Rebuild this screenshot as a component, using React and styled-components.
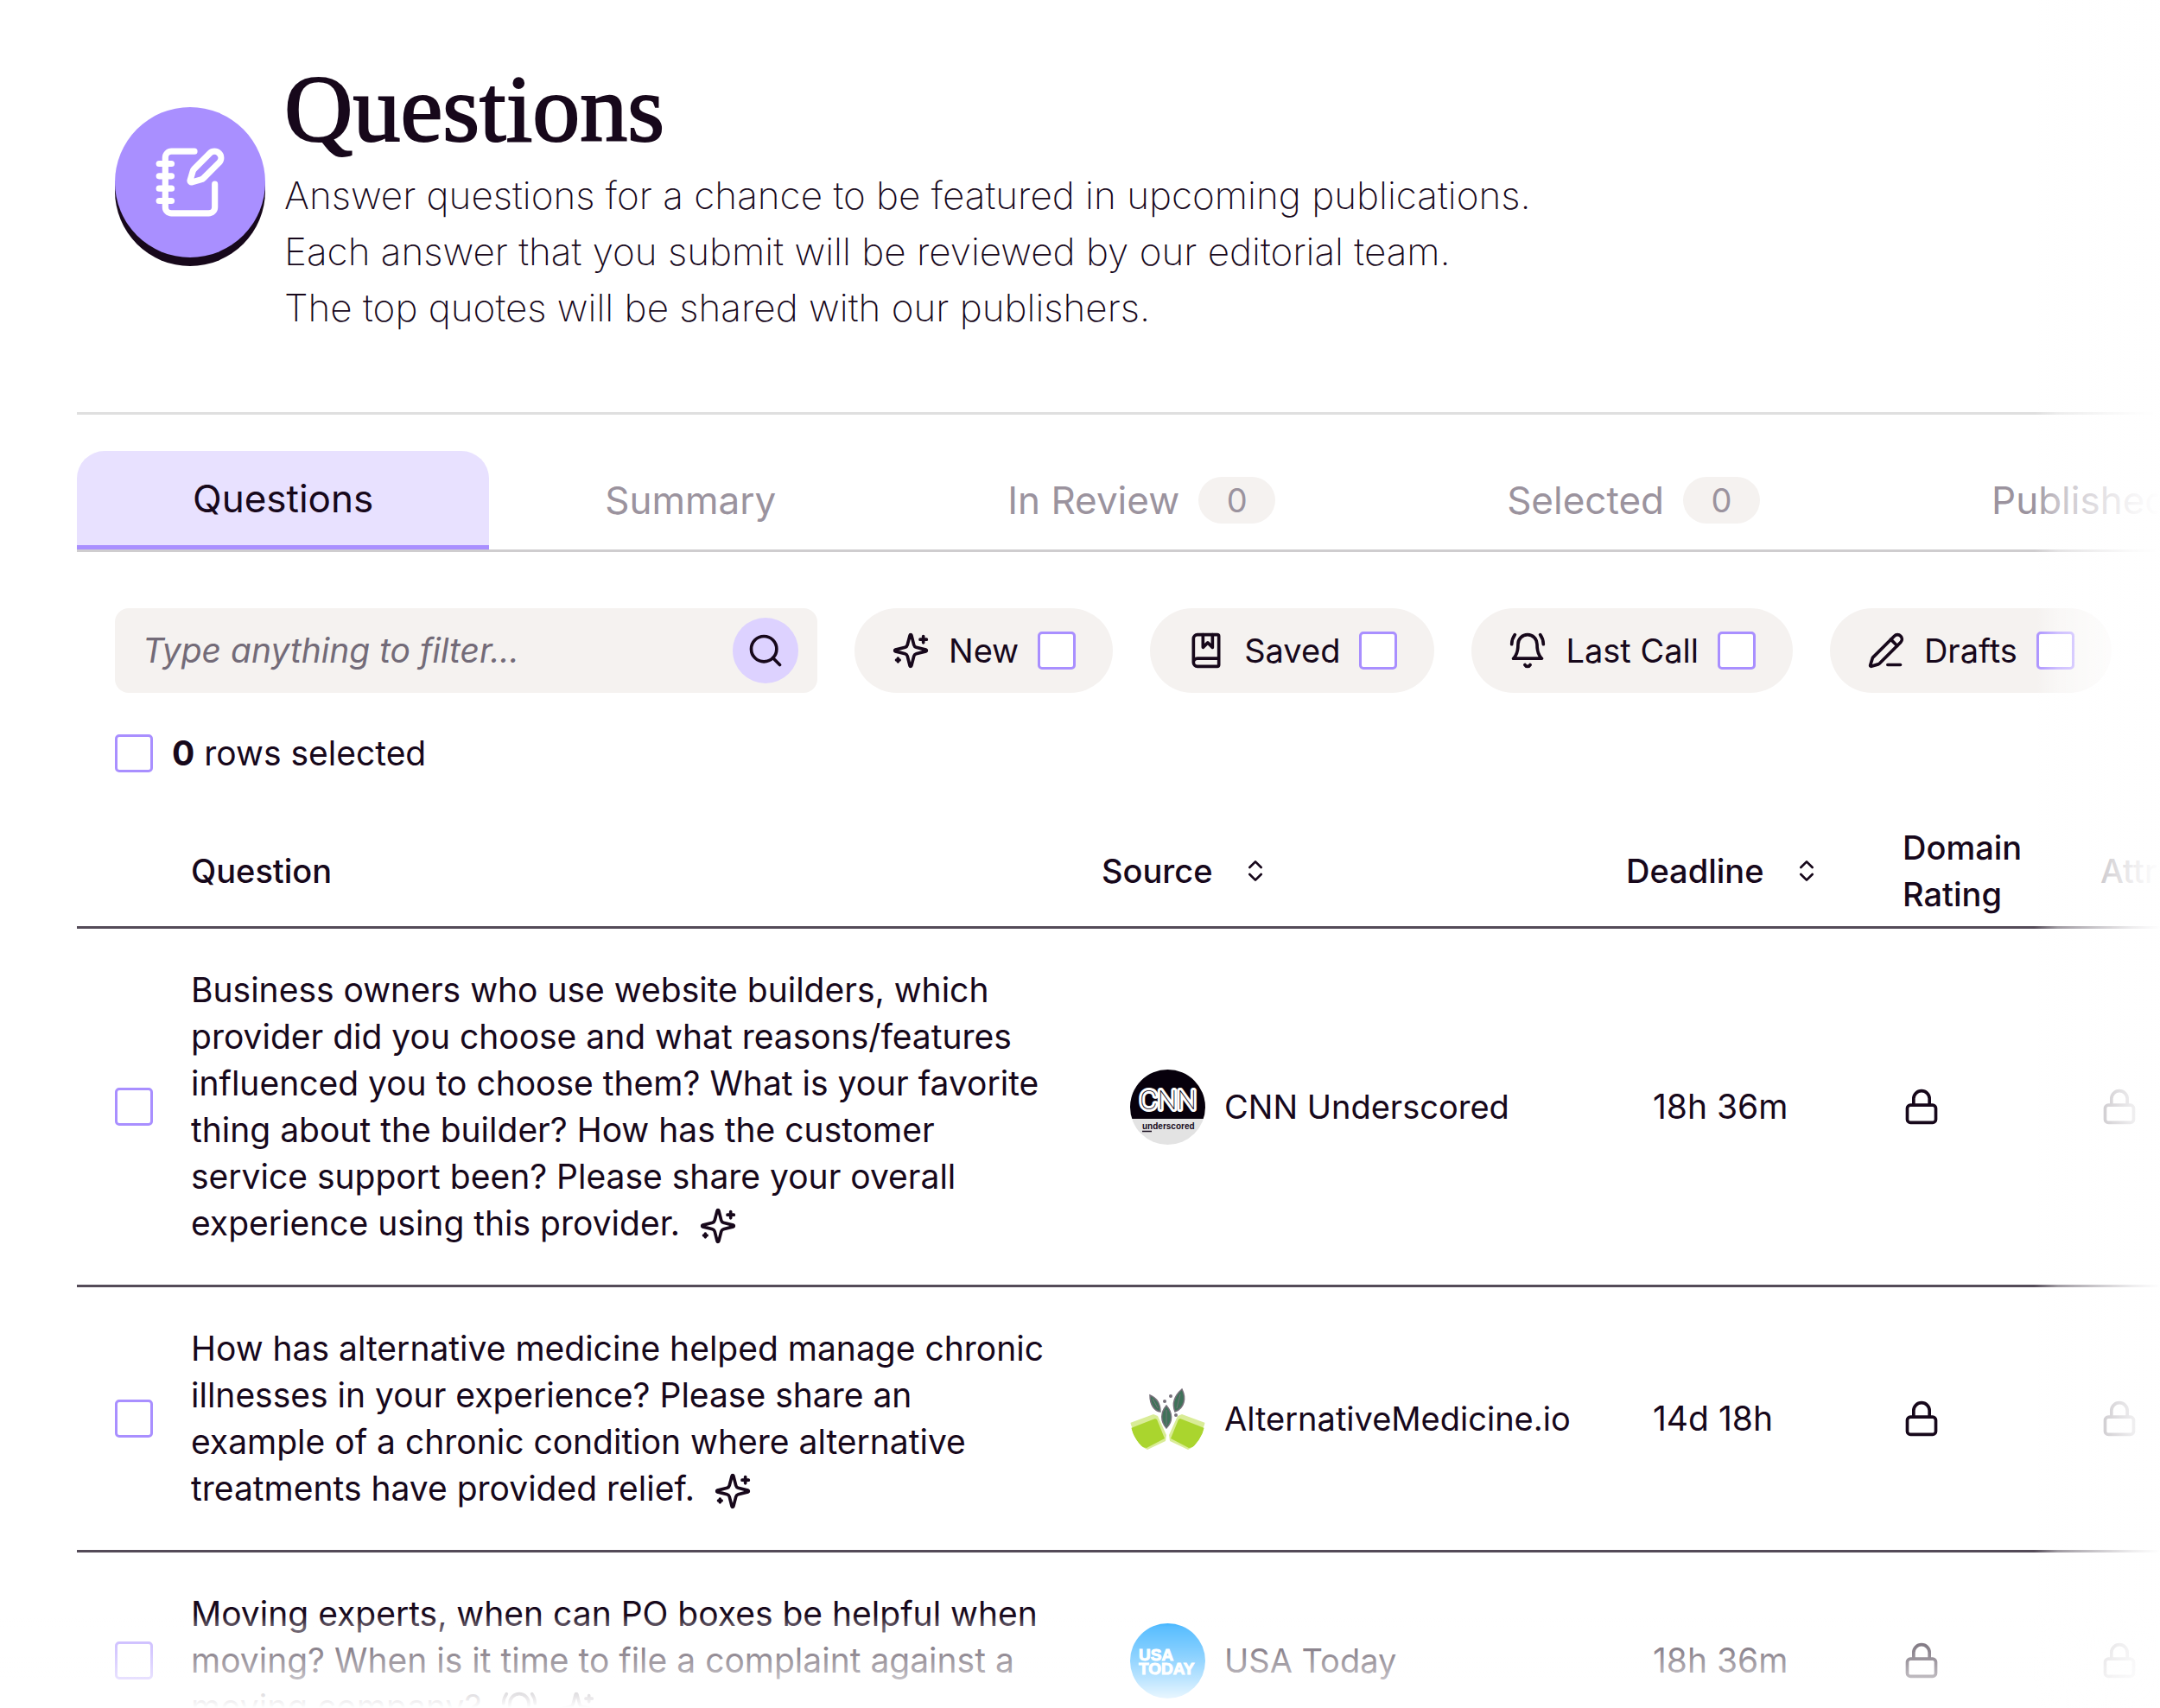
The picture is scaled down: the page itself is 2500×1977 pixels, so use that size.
import { useState } from "react";
import styled, { createGlobalStyle } from "styled-components";
import {
  ChevronsUpDown,
  Lock,
  NotebookPen,
  PencilLine,
  Search,
} from "lucide-react";

const tabs = [
  { name: "Questions" },
  { name: "Summary" },
  { name: "In Review", count: 0 },
  { name: "Selected", count: 0 },
  { name: "Published", count: 0 },
];

const LineIcon = ({ children, className }) => (
  <svg
    className={className}
    width="44"
    height="44"
    viewBox="0 0 24 24"
    fill="none"
    stroke="currentColor"
    strokeWidth="2"
    strokeLinecap="round"
    strokeLinejoin="round"
    aria-hidden="true"
  >
    {children}
  </svg>
);

const SparkleIcon = () => (
  <LineIcon>
    <path d="M9.937 15.5A2 2 0 0 0 8.5 14.063l-6.135-1.582a.5.5 0 0 1 0-.962L8.5 9.936A2 2 0 0 0 9.937 8.5l1.582-6.135a.5.5 0 0 1 .963 0L14.063 8.5A2 2 0 0 0 15.5 9.937l6.135 1.581a.5.5 0 0 1 0 .964L15.5 14.063a2 2 0 0 0-1.437 1.437l-1.582 6.135a.5.5 0 0 1-.963 0z" />
    <path d="M20 3v4M22 5h-4M4 17v2M5 18H3" />
  </LineIcon>
);

const BookIcon = () => (
  <LineIcon>
    <path d="M4 19.5v-15A2.5 2.5 0 0 1 6.5 2H19a1 1 0 0 1 1 1v18a1 1 0 0 1-1 1H6.5a2.5 2.5 0 0 1 0-5H20" />
    <path d="M10 2v8l3-3 3 3V2" />
  </LineIcon>
);

const BellIcon = () => (
  <LineIcon>
    <path d="M6 8a6 6 0 0 1 12 0c0 7 3 9 3 9H3s3-2 3-9" />
    <path d="M10.3 21a1.94 1.94 0 0 0 3.4 0" />
    <path d="M4 2C2.8 3.7 2 5.7 2 8M22 8c0-2.3-.8-4.3-2-6" />
  </LineIcon>
);

const CnnLogo = () => (
  <Logo viewBox="0 0 87 87" aria-hidden="true">
    <rect width="87" height="57" fill="#07000c" />
    <rect y="57" width="87" height="30" fill="#e3e3e3" />
    <g fontFamily="Roboto, sans-serif" fontWeight="100" fontSize="32" strokeLinejoin="round">
      <text x="44" y="46" textAnchor="middle" fill="#fff" stroke="#fff" strokeWidth="6">
        CNN
      </text>
      <text x="44" y="46" textAnchor="middle" fill="#07000c">
        CNN
      </text>
    </g>
    <text x="14" y="69" fontFamily="Liberation Sans, sans-serif" fontWeight="700" fontSize="10" fill="#160a1c">
      underscored
    </text>
    <path d="M14 71.500h11" stroke="#160a1c" strokeWidth="1.500" />
  </Logo>
);

const AltMedLogo = () => (
  <Logo viewBox="0 0 87 87" aria-hidden="true">
    <g fill="#d9ec97">
      <path d="M0 48 27 38l5 2 10 22-1 7-21 10-8-4z" />
      <path d="M87 48 60 38l-5 2-10 22 1 7 21 10 8-4z" />
    </g>
    <g fill="#aad52e">
      <path d="M1 54 29 43l2 1 9 22-21 11-5-1C8 70 3 62 1 54z" />
      <path d="M86 54 58 43l-2 1-9 22 21 11 5-1c6-6 11-14 13-22z" />
    </g>
    <g fill="#3f7259" stroke="#77707a" strokeWidth="1.500">
      <path d="M23 16c7 3 12 9 12 19-7-1-12-8-12-19z" />
      <path d="M42 28c7 8 8 18 0 26-7-8-7-18 0-26z" />
      <path d="M60 9c5 10 3 22-8 26-4-10 0-19 8-26z" />
      <path d="M42 33v18M58 15l-4 16M26 20l6 11" fill="none" strokeWidth="1" />
    </g>
    <g fill="#77707a">
      <circle cx="47" cy="17" r="2" />
      <circle cx="40" cy="23" r="2" />
      <circle cx="53" cy="39" r="2" />
    </g>
  </Logo>
);

const UsaTodayLogo = () => (
  <Logo viewBox="0 0 87 87" aria-hidden="true">
    <rect width="87" height="87" fill="#009bff" />
    <g fontFamily="Liberation Sans, sans-serif" fontWeight="700" fontSize="19" fill="#fff" stroke="#fff">
      <text x="10" y="43">USA</text>
      <text x="10" y="59">TODAY</text>
    </g>
  </Logo>
);

const filters = [
  { name: "New", icon: <SparkleIcon /> },
  { name: "Saved", icon: <BookIcon /> },
  { name: "Last Call", icon: <BellIcon /> },
  { name: "Drafts", icon: <PencilLine size={44} /> },
];

const questions = [
  {
    id: 1,
    text: "Business owners who use website builders, which provider did you choose and what reasons/features influenced you to choose them? What is your favorite thing about the builder? How has the customer service support been? Please share your overall experience using this provider.",
    icons: [<SparkleIcon key="new" />],
    source: "CNN Underscored",
    logo: <CnnLogo />,
    deadline: "18h 36m",
  },
  {
    id: 2,
    text: "How has alternative medicine helped manage chronic illnesses in your experience? Please share an example of a chronic condition where alternative treatments have provided relief.",
    icons: [<SparkleIcon key="new" />],
    source: "AlternativeMedicine.io",
    logo: <AltMedLogo />,
    deadline: "14d 18h",
  },
  {
    id: 3,
    text: "Moving experts, when can PO boxes be helpful when moving? When is it time to file a complaint against a moving company?",
    icons: [<BellIcon key="call" />, <SparkleIcon key="new" />],
    source: "USA Today",
    logo: <UsaTodayLogo />,
    deadline: "18h 36m",
  },
];

export default function App() {
  const [activeTab, setActiveTab] = useState("Questions");
  const [query, setQuery] = useState("");
  const [selected, setSelected] = useState([]);

  const toggleRow = (id) => {
    setSelected((prev) =>
      prev.includes(id) ? prev.filter((x) => x !== id) : [...prev, id]
    );
  };
  const toggleAll = () => {
    setSelected(
      selected.length === questions.length ? [] : questions.map((q) => q.id)
    );
  };

  return (
    <Page>
      <GlobalStyle />
      <Hero>
        <HeroBadge>
          <NotebookPen size={86} />
        </HeroBadge>
        <div>
          <Title>Questions</Title>
          <Intro>
            Answer questions for a chance to be featured in upcoming
            publications.
            <br />
            Each answer that you submit will be reviewed by our editorial team.
            <br />
            The top quotes will be shared with our publishers.
          </Intro>
        </div>
      </Hero>

      <Tabs>
        {tabs.map((tab) => (
          <Tab
            key={tab.name}
            type="button"
            $active={tab.name === activeTab}
            onClick={() => setActiveTab(tab.name)}
          >
            {tab.name}
            {tab.count !== undefined && <Count>{tab.count}</Count>}
          </Tab>
        ))}
      </Tabs>

      <Toolbar>
        <SearchBox>
          <SearchInput
            type="text"
            aria-label="Filter questions"
            placeholder="Type anything to filter..."
            value={query}
            onChange={(e) => setQuery(e.target.value)}
          />
          <SearchButton type="button" aria-label="Search">
            <Search size={44} />
          </SearchButton>
        </SearchBox>
        {filters.map((filter) => (
          <Chip key={filter.name}>
            {filter.icon}
            {filter.name}
            <Checkbox type="checkbox" />
          </Chip>
        ))}
      </Toolbar>

      <Selection>
        <Checkbox
          type="checkbox"
          checked={selected.length === questions.length}
          onChange={toggleAll}
        />
        <span>
          <b>{selected.length}</b> rows selected
        </span>
      </Selection>

      <Table>
        <colgroup>
          <Col $width={132} />
          <col />
          <Col $width={607} />
          <Col $width={320} />
          <Col $width={229} />
          <Col $width={309} />
        </colgroup>
        <thead>
          <tr>
            <Th aria-label="Select" />
            <Th>Question</Th>
            <Th>
              <Sortable>
                Source
                <SortButton type="button" aria-label="Sort by source">
                  <ChevronsUpDown size={32} />
                </SortButton>
              </Sortable>
            </Th>
            <Th>
              <Sortable>
                Deadline
                <SortButton type="button" aria-label="Sort by deadline">
                  <ChevronsUpDown size={32} />
                </SortButton>
              </Sortable>
            </Th>
            <Th>
              Domain
              <br />
              Rating
            </Th>
            <Th $faded>Attribution</Th>
          </tr>
        </thead>
        <tbody>
          {questions.map((q) => (
            <tr key={q.id}>
              <Td $indent={44}>
                <Checkbox
                  type="checkbox"
                  aria-label={`Select question from ${q.source}`}
                  checked={selected.includes(q.id)}
                  onChange={() => toggleRow(q.id)}
                />
              </Td>
              <QuestionCell>
                {q.text}
                {q.icons}
              </QuestionCell>
              <Td $indent={33}>
                <Source>
                  {q.logo}
                  {q.source}
                </Source>
              </Td>
              <Td $indent={31}>{q.deadline}</Td>
              <Td>
                <Lock size={44} aria-label="Locked" />
              </Td>
              <Td $faded>
                <Lock size={44} aria-label="Locked" />
              </Td>
            </tr>
          ))}
        </tbody>
      </Table>
      <EdgeFade />
    </Page>
  );
}

const GlobalStyle = createGlobalStyle`
  * {
    box-sizing: border-box;
  }
  body {
    margin: 0;
    background-color: white;
    color: #17081b;
    font-family: Inter, sans-serif;
    font-size: 39px;
    line-height: 54px;
  }
  button, input {
    font: inherit;
    color: inherit;
  }
  svg {
    flex-shrink: 0;
  }
`;

const Page = styled.main`
  height: 100vh;
  overflow: hidden;
  padding-left: 89px;
`;

const Hero = styled.header`
  display: flex;
  gap: 22px;
  padding: 70px 44px 88px;
  border-bottom: 3px solid #dfdfdf;
`;

const HeroBadge = styled.div`
  display: grid;
  place-items: center;
  flex-shrink: 0;
  width: 174px;
  height: 174px;
  margin-top: 54px;
  border-radius: 50%;
  background-color: #a98fff;
  box-shadow: 0 10px 0 #17081b;
  color: white;
`;

const Title = styled.h1`
  margin: 0 0 12px;
  font-family: "Liberation Serif", serif;
  font-size: 110px;
  font-weight: 400;
  line-height: 112px;
  -webkit-text-stroke: 2px currentColor;
`;

const Intro = styled.p`
  margin: 0;
  font-size: 44px;
  font-weight: 200;
  line-height: 65px;
`;

const Tabs = styled.nav`
  display: flex;
  margin-top: 42px;
  border-bottom: 3px solid #cfcdcf;
`;

const Tab = styled.button`
  display: flex;
  align-items: center;
  flex-shrink: 0;
  gap: 22px;
  height: 114px;
  padding: 0 134px;
  border: none;
  border-bottom: ${(props) => (props.$active ? "5px solid #a98fff" : "none")};
  border-radius: 32px 32px 0 0;
  background-color: ${(props) => (props.$active ? "#e8e1ff" : "transparent")};
  color: ${(props) => (props.$active ? "#17081b" : "#9b939e")};
  font-size: 44px;
  cursor: pointer;
`;

const Count = styled.span`
  width: 89px;
  border-radius: 27px;
  background-color: #f5f2f0;
  font-size: 38px;
  text-align: center;
`;

const Toolbar = styled.div`
  display: flex;
  gap: 43px;
  padding: 65px 0 43px 44px;
`;

const SearchBox = styled.div`
  display: flex;
  align-items: center;
  flex: 0 0 813px;
  height: 98px;
  padding: 0 22px 0 32px;
  border-radius: 16px;
  background-color: #f5f2f0;
`;

const SearchInput = styled.input`
  flex: 1;
  min-width: 0;
  padding: 0;
  border: none;
  outline: none;
  background: transparent;
  &::placeholder {
    color: #736b78;
    font-style: italic;
    opacity: 1;
  }
`;

const SearchButton = styled.button`
  display: grid;
  place-items: center;
  width: 76px;
  height: 76px;
  padding: 0;
  border: none;
  border-radius: 50%;
  background-color: #ddd2ff;
  cursor: pointer;
`;

const Chip = styled.label`
  display: flex;
  align-items: center;
  flex-shrink: 0;
  gap: 22px;
  height: 98px;
  padding: 0 43px;
  border-radius: 49px;
  background-color: #f5f2f0;
  font-size: 38px;
  cursor: pointer;
`;

const Checkbox = styled.input`
  appearance: none;
  display: block;
  flex-shrink: 0;
  width: 44px;
  height: 44px;
  margin: 0;
  border: 3px solid #a98fff;
  border-radius: 5px;
  background-color: white;
  cursor: pointer;
  &:checked {
    background-color: #a98fff;
  }
`;

const Selection = styled.label`
  display: inline-flex;
  align-items: center;
  gap: 22px;
  margin: 0 0 45px 44px;
`;

const Table = styled.table`
  width: calc(100% + 240px);
  table-layout: fixed;
  border-collapse: separate;
  border-spacing: 0;
`;

const Col = styled.col`
  width: ${(props) => props.$width}px;
`;

const Th = styled.th`
  padding: 10px 0;
  border-bottom: 3px solid #544b58;
  font-size: 38px;
  font-weight: 500;
  text-align: left;
  color: ${(props) => (props.$faded ? "#544b58" : "inherit")};
`;

const Sortable = styled.div`
  display: flex;
  align-items: center;
  gap: 33px;
`;

const SortButton = styled.button`
  display: flex;
  padding: 0;
  border: none;
  background: none;
  cursor: pointer;
`;

const Td = styled.td`
  padding: 44px 0 44px ${(props) => props.$indent || 0}px;
  border-bottom: 3px solid #544b58;
  color: ${(props) => (props.$faded ? "#544b58" : "inherit")};
  svg {
    display: block;
  }
`;

const QuestionCell = styled.td`
  padding: 44px 56px 44px 0;
  border-bottom: 3px solid #544b58;
  svg {
    margin-left: 22px;
    vertical-align: middle;
  }
`;

const Source = styled.div`
  display: flex;
  align-items: center;
  gap: 22px;
  font-size: 38px;
`;

const Logo = styled.svg`
  width: 87px;
  height: 87px;
  border-radius: 50%;
`;

// Content dissolves into the page towards the right and bottom edges
const EdgeFade = styled.div`
  position: fixed;
  inset: 0;
  pointer-events: none;
  background-image: linear-gradient(
      to left,
      rgb(255, 255, 255) 0,
      rgba(255, 255, 255, 0.9) 32px,
      rgba(255, 255, 255, 0.7) 72px,
      rgba(255, 255, 255, 0.45) 118px,
      rgba(255, 255, 255, 0) 146px
    ),
    linear-gradient(
      to top,
      rgb(255, 255, 255) 0,
      rgba(255, 255, 255, 0.75) 32px,
      rgba(255, 255, 255, 0.55) 60px,
      rgba(255, 255, 255, 0.35) 94px,
      rgba(255, 255, 255, 0) 108px
    );
`;
